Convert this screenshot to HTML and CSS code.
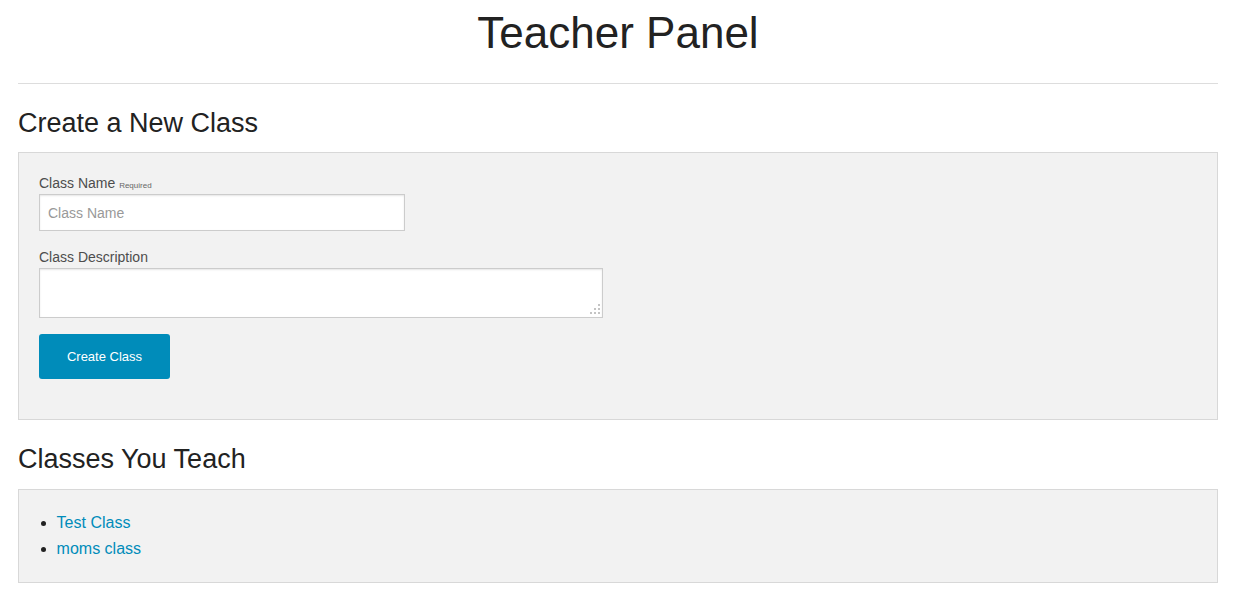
FILE: index.html
```html
<!DOCTYPE html>
<html lang="en">
<head>
<meta charset="utf-8">
<title>Teacher Panel</title>
<link rel="stylesheet" href="styles.css">
</head>
<body>
<div class="page">
  <h1 class="title">Teacher Panel</h1>
  <hr class="rule">

  <h2 class="section-title">Create a New Class</h2>
  <div class="panel panel-form">
    <form class="form">
      <label class="label">Class Name <small class="req">Required</small></label>
      <input class="input" type="text" placeholder="Class Name">

      <label class="label">Class Description</label>
      <div class="textarea-wrap">
        <textarea class="textarea"></textarea>
        <svg class="grip" width="12" height="12" viewBox="0 0 12 12" aria-hidden="true">
          <rect x="9" y="0" width="2" height="2" fill="#c4c4c4"/>
          <rect x="5" y="4" width="2" height="2" fill="#c4c4c4"/>
          <rect x="9" y="4" width="2" height="2" fill="#c4c4c4"/>
          <rect x="1" y="8" width="2" height="2" fill="#c4c4c4"/>
          <rect x="5" y="8" width="2" height="2" fill="#c4c4c4"/>
          <rect x="9" y="8" width="2" height="2" fill="#c4c4c4"/>
        </svg>
      </div>

      <button class="button" type="button">Create Class</button>
    </form>
  </div>

  <h2 class="section-title">Classes You Teach</h2>
  <div class="panel panel-list">
    <ul class="class-list">
      <li><a href="#">Test Class</a></li>
      <li><a href="#">moms class</a></li>
    </ul>
  </div>
</div>
</body>
</html>
```

FILE: styles.css
```css
* {
  box-sizing: border-box;
}

html, body {
  margin: 0;
  padding: 0;
  background: #fff;
}

body {
  font-family: "Liberation Sans", Arial, Helvetica, sans-serif;
  color: #222;
  font-size: 16px;
  line-height: 1.5;
}

.page {
  margin: 0 19px 0 18px;
}

.title {
  font-size: 44px;
  font-weight: normal;
  line-height: 1.4;
  text-align: center;
  margin: 2px 0 0;
  color: #222;
}

.rule {
  border: 0;
  border-top: 1px solid #ddd;
  height: 0;
  margin: 19px 0 21px;
}

.section-title {
  font-size: 27px;
  font-weight: normal;
  line-height: 1.4;
  margin: 3px 0 10px;
  color: #222;
}

.panel {
  background: #f2f2f2;
  border: 1px solid #d8d8d8;
  padding: 20px;
  margin-bottom: 20px;
}

.panel-form {
  margin-bottom: 21px;
}

.panel-list {
  padding-bottom: 21px;
}

.form {
  display: flex;
  flex-direction: column;
  align-items: flex-start;
}

.label {
  font-size: 14px;
  line-height: 21px;
  height: 21px;
  color: #4d4d4d;
}

.req {
  font-size: 8px;
  line-height: 1;
  color: #676767;
}

.input {
  width: 366px;
  height: 37px;
  border: 1px solid #ccc;
  background: #fff;
  box-shadow: inset 0 1px 2px rgba(0,0,0,0.1);
  font-family: "Liberation Sans", Arial, sans-serif;
  font-size: 14px;
  color: rgba(0,0,0,0.75);
  padding: 8px;
  margin: 0 0 16px;
  outline: none;
}

.input::placeholder {
  color: #999;
}

.textarea-wrap {
  position: relative;
  width: 564px;
  height: 50px;
  margin: 0 0 16px;
}

.textarea {
  display: block;
  width: 100%;
  height: 100%;
  border: 1px solid #ccc;
  background: #fff;
  box-shadow: inset 0 1px 2px rgba(0,0,0,0.1);
  resize: none;
  font-family: "Liberation Sans", Arial, sans-serif;
  font-size: 14px;
  padding: 8px;
  margin: 0;
  outline: none;
}

.grip {
  position: absolute;
  right: 2px;
  bottom: 2px;
}

.button {
  width: 131px;
  height: 45px;
  background: #008cba;
  color: #fff;
  border: 0;
  border-radius: 3px;
  font-family: "Liberation Sans", Arial, sans-serif;
  font-size: 13px;
  margin: 0 0 20px;
  padding: 0;
  cursor: pointer;
}

.class-list {
  margin: 0 0 0 17.6px;
  padding: 0;
  font-size: 16px;
  line-height: 1.6;
  list-style: disc outside;
  color: #222;
}

.class-list a {
  color: #008cba;
  text-decoration: none;
}
```
